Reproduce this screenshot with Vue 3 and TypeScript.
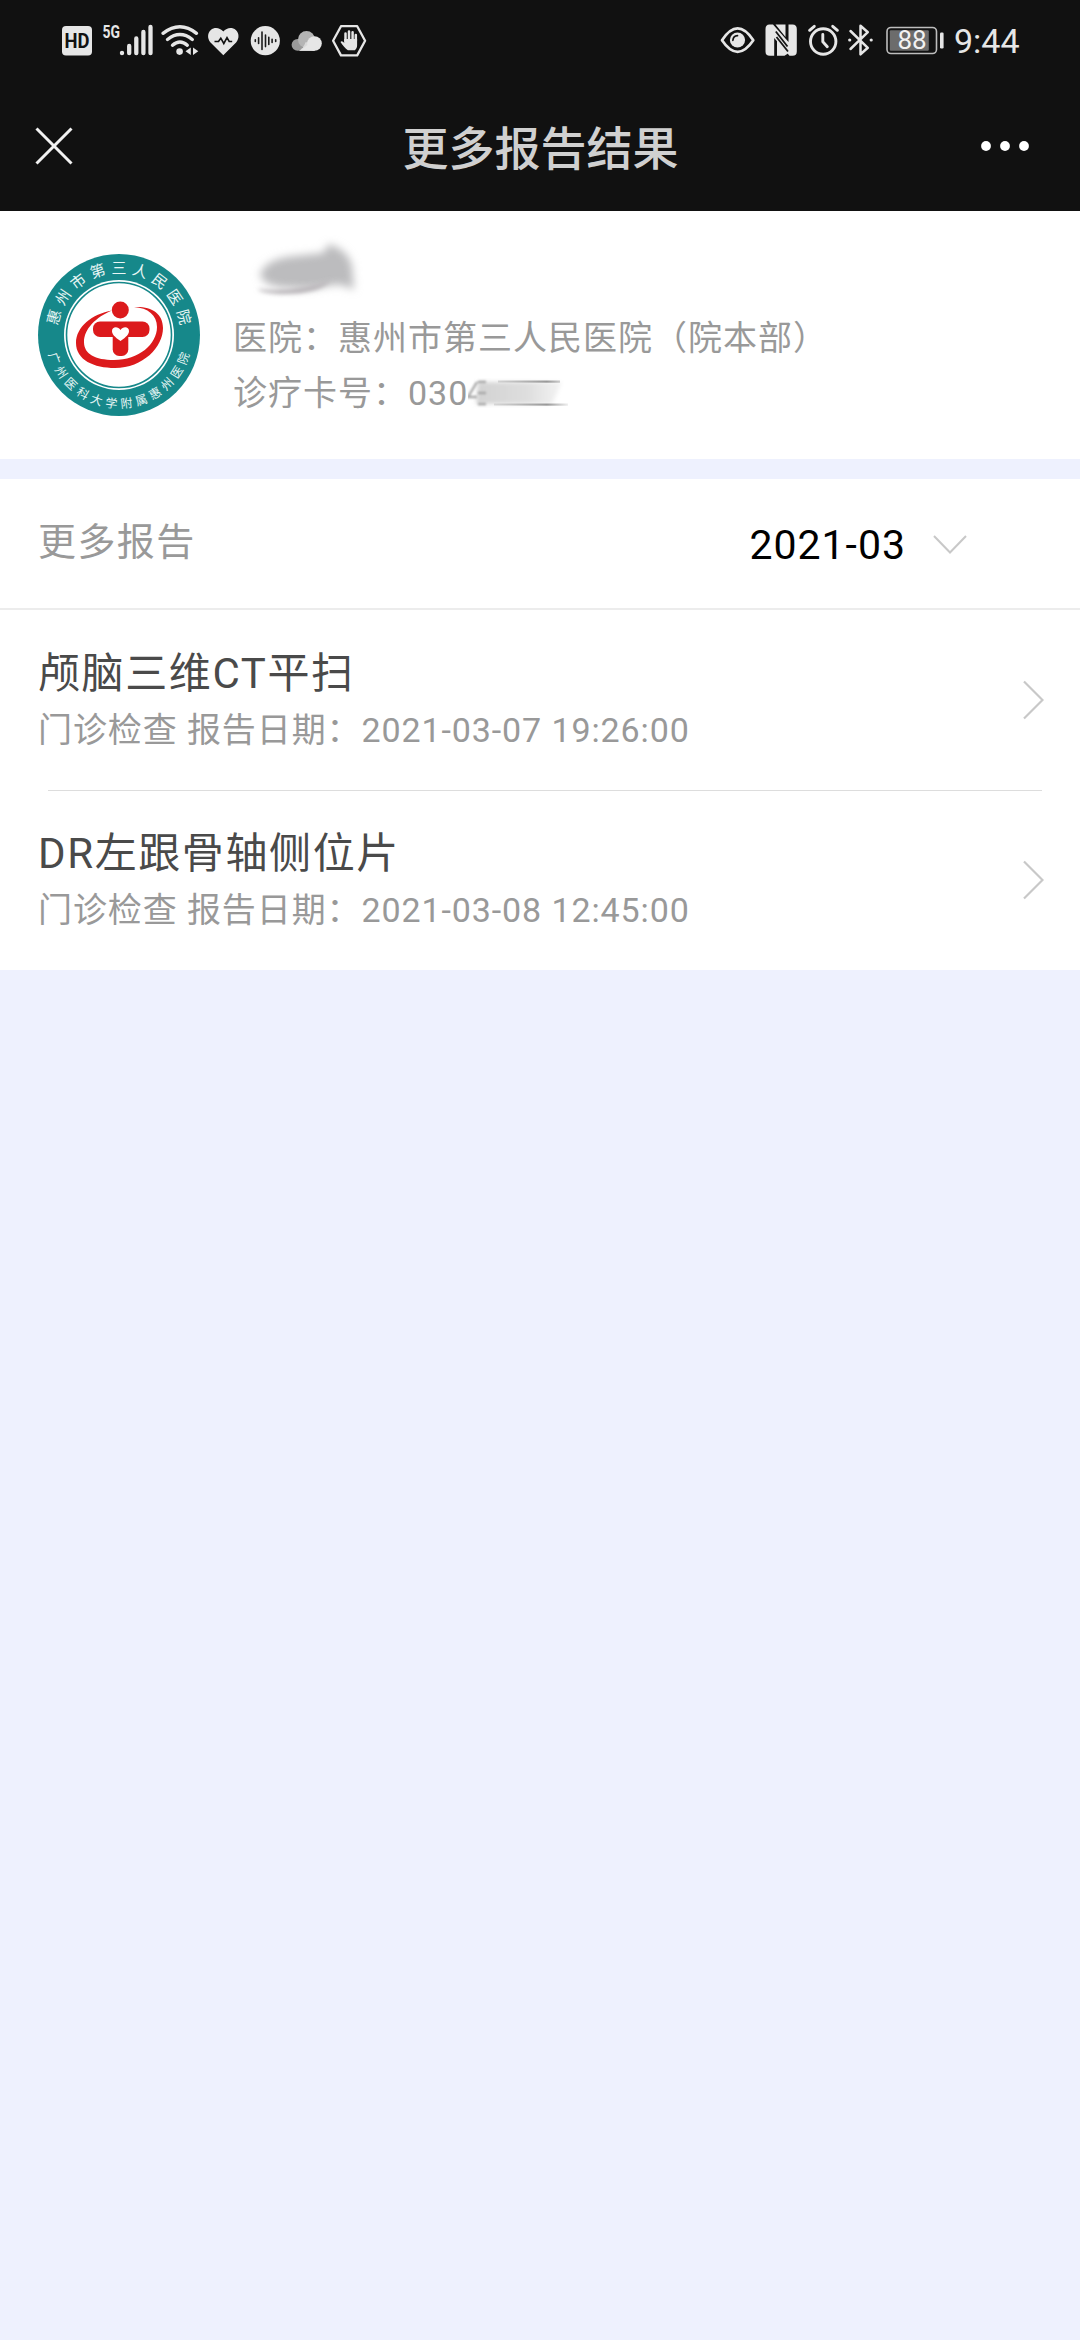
<template>
  <div class="page">
    <header class="top">
      <div class="status-bar">
        <div class="status-group">
          <svg width="40" height="50" viewBox="58 15 40 50">
            <rect x="62" y="26" width="30" height="29.5" rx="4" fill="#e6e6e6" />
            <text x="77" y="47.8" class="hd" text-anchor="middle" textLength="25" lengthAdjust="spacingAndGlyphs">HD</text>
          </svg>
          <svg width="60" height="50" viewBox="98 15 60 50">
            <text x="102.5" y="38.4" class="net" textLength="17.5" lengthAdjust="spacingAndGlyphs">5G</text>
            <path d="M122 52.8v.4M129.2 46v7.2M136.3 38.5v14.7M143.4 32v21.2M150.5 27v26.2" stroke="#e6e6e6" stroke-width="4.3" stroke-linecap="round" />
          </svg>
          <svg width="45" height="50" viewBox="158 15 45 50" fill="none" stroke="#e6e6e6" stroke-linecap="round">
            <path d="M163 33.3Q180 20.2 196.5 33.3" stroke-width="3.4" />
            <path d="M167.5 39.5Q180 29.7 192.3 39.5" stroke-width="3.4" />
            <path d="M172.5 45.2Q180 38.7 187.3 45.2" stroke-width="3.4" />
            <circle cx="179.6" cy="51.6" r="3.3" fill="#e6e6e6" stroke="none" />
            <path d="M190.8 47.5v7.5l-5.3-3.7zM193 47.5v7.5l5.3-3.7z" fill="#e6e6e6" stroke="none" />
          </svg>
          <svg width="40" height="50" viewBox="203 15 40 50">
            <path d="M223.3 55.3L210.5 42.5C207.2 38.7 207.3 33 210.8 30C214.5 26.9 219.8 27.5 223.3 31.6C226.8 27.5 232.1 26.9 235.8 30C239.3 33 239.4 38.7 236.1 42.5Z" fill="#e6e6e6" />
            <path d="M214.5 41.5h4l2.3-3.3 3 5.3 3.2-5.9 2.2 3.9h3" fill="none" stroke="#111" stroke-width="1.6" />
          </svg>
          <svg width="43" height="50" viewBox="243 15 43 50">
            <circle cx="265.3" cy="40.7" r="14.6" fill="#e6e6e6" />
            <path d="M255.3 39.7v1.8M258.6 37.7v5.8M262 32v17.5M265.5 35v11.6M268.8 37.2v7.2M272.1 39.2v3.2M275.7 39.8v1.6" stroke="#1c1c1c" stroke-width="1.6" stroke-linecap="round" />
          </svg>
          <svg width="41" height="50" viewBox="286 15 41 50">
            <circle cx="297.5" cy="44.8" r="5.9" fill="#9a9a9a" />
            <circle cx="306.5" cy="39.5" r="8.5" fill="#b5b5b5" />
            <path d="M299 50.7c3-2 5.5-5 6.5-8.5h9v8.5z" fill="#d9d9d9" />
            <circle cx="314.5" cy="43.5" r="7.3" fill="#e6e6e6" />
            <path d="M297.5 50.7c6 0 7-5.2 12-6.7h5v6.7z" fill="#e6e6e6" />
          </svg>
          <svg width="44" height="50" viewBox="327 15 44 50">
            <path d="M341 26.2h16.2l7.9 14.6-7.9 14.6H341l-7.9-14.6z" fill="none" stroke="#e6e6e6" stroke-width="2.3" stroke-linejoin="round" />
            <path d="M345.5 41V33.5M349 40V31.5M352.6 40V32.2M355.8 41V35" stroke="#e6e6e6" stroke-width="2.5" stroke-linecap="round" />
            <path d="M344.2 39h12.9v6.5c0 2-1 3.5-2.2 4.8h-7c-2.5-1.7-5.2-5-7.4-8.3 1-1.6 2.5-.7 3.7 1z" fill="#e6e6e6" />
          </svg>
        </div>
        <div class="status-group">
          <svg width="44" height="50" viewBox="716 15 44 50">
            <path d="M722 40.2Q737.6 16.5 753.3 40.2Q737.6 63.4 722 40.2Z" fill="none" stroke="#e6e6e6" stroke-width="2.7" stroke-linejoin="round" />
            <circle cx="737.5" cy="40" r="7.6" fill="#e6e6e6" />
            <path d="M732.9 40.3c.2-2.8 1.8-4.5 4.6-4.7" fill="none" stroke="#111" stroke-width="1.7" stroke-linecap="round" />
          </svg>
          <svg width="43" height="50" viewBox="760 15 43 50">
            <path d="M769.5 24.5H773L788.5 42V24.5H792.5Q796.8 24.5 796.8 29V51.5Q796.8 55.8 792.5 55.8H789.5L774.2 38V55.8H769.8Q765.5 55.8 765.5 51.5V29Q765.5 24.5 769.5 24.5Z" fill="#e6e6e6" />
            <path d="M777 37V55.8H784.5L788 53.5ZM775.5 24.5H785.5V37Z" fill="#e6e6e6" />
            <path d="M775.8 31.5L787.5 46.5M776.5 37L788 51.5" stroke="#151515" stroke-width="1.8" />
          </svg>
          <svg width="41" height="50" viewBox="803 15 41 50" fill="none" stroke="#e6e6e6" stroke-width="2.9" stroke-linecap="round">
            <circle cx="823.2" cy="41.5" r="12.7" />
            <path d="M822.8 34.5v7.2l4.5 5" />
            <path d="M809.6 30.3l4.7-4M832.7 26.3l4.7 4" />
          </svg>
          <svg width="37" height="50" viewBox="844 15 37 50">
            <path d="M850.5 31L867.8 47.8L860.5 54.3V25.7L867.8 32.2L850.5 49" fill="none" stroke="#e6e6e6" stroke-width="2.5" stroke-linejoin="round" stroke-linecap="round" />
            <circle cx="849.7" cy="40" r="1.6" fill="#e6e6e6" />
            <circle cx="871.2" cy="40" r="1.6" fill="#e6e6e6" />
          </svg>
          <svg width="69" height="50" viewBox="881 15 69 50">
            <rect x="887" y="27.5" width="49.5" height="26" rx="4" fill="none" stroke="#bdbdbd" stroke-width="1.6" />
            <rect x="889.8" y="30.3" width="39" height="20.4" rx="1" fill="#6c6c6c" />
            <rect x="940" y="32.5" width="3.6" height="16" rx="1.2" fill="#e6e6e6" />
            <text x="912" y="49.2" class="battery" text-anchor="middle">88</text>
          </svg>
          <span class="clock">9:44</span>
        </div>
      </div>
      <div class="nav-bar">
        <svg width="40" height="40" viewBox="0 0 40 40">
          <path d="M2.5 2.5L37.5 37.5M37.5 2.5L2.5 37.5" stroke="#f2f2f2" stroke-width="3" />
        </svg>
        <h1>更多报告结果</h1>
        <svg width="50" height="12" viewBox="0 0 50 12" fill="#fff">
          <circle cx="6" cy="6" r="4.9" />
          <circle cx="25" cy="6" r="4.9" />
          <circle cx="44" cy="6" r="4.9" />
        </svg>
      </div>
    </header>

    <section class="patient">
      <svg width="164" height="164" viewBox="-82 -82 164 164">
        <defs>
          <path id="arc-top" d="M-62 0A62 62 0 0 1 62 0" />
          <path id="arc-bottom" d="M-73 0A73 73 0 0 0 73 0" />
        </defs>
        <circle r="81" fill="#16888a" />
        <circle r="55" fill="#fff" />
        <circle r="52.5" fill="none" stroke="#16888a" stroke-width="1.6" />
        <text class="seal seal-top"><textPath href="#arc-top" startOffset="50%" text-anchor="middle" textLength="176">惠州市第三人民医院</textPath></text>
        <text class="seal seal-bottom"><textPath href="#arc-bottom" startOffset="50%" text-anchor="middle" textLength="190">广州医科大学附属惠州医院</textPath></text>
        <g fill="#dc1a1c">
          <circle cx="1.3" cy="-25" r="8.5" />
          <rect x="-26" y="-13.5" width="56.5" height="15.5" rx="7" />
          <rect x="-6.3" y="-12" width="15.6" height="33" rx="6.5" />
          <path d="M-7 -24.5C-27 -21 -43 -8 -43 8C-43 25 -25 33 -4 33C24 33 44 12 44 -7C44 -22 32 -29 15 -28C29 -27 38 -20 38 -8C38 9 20 25 -5 25C-24 25 -35 19 -35 7C-35 -6 -23 -18 -7 -24.5Z" />
        </g>
        <path d="M1.5 6C-4.5 2 -7 -1 -7 -4C-7 -8.5 -1 -9 1.5 -5C4 -9 10 -8.5 10 -4C10 -1 7.5 2 1.5 6Z" fill="#fff" />
      </svg>
      <div class="patient-info">
        <svg class="name-smudge" width="150" height="76" viewBox="0 0 150 76">
          <defs>
            <filter id="soft" x="-30%" y="-30%" width="160%" height="160%"><feGaussianBlur stdDeviation="4.5" /></filter>
            <filter id="soft-small" x="-30%" y="-50%" width="160%" height="200%"><feGaussianBlur stdDeviation="2" /></filter>
            <filter id="soft-tiny" x="-10%" y="-30%" width="120%" height="160%"><feGaussianBlur stdDeviation="1" /></filter>
            <linearGradient id="fade">
              <stop offset="0" stop-color="#d2d2d2" />
              <stop offset="0.6" stop-color="#dedede" />
              <stop offset="1" stop-color="#f4f4f4" />
            </linearGradient>
            <linearGradient id="fade-line" gradientUnits="userSpaceOnUse" x1="20" y1="0" x2="104" y2="0">
              <stop offset="0" stop-color="#999" stop-opacity="0.2" />
              <stop offset="0.7" stop-color="#999" />
              <stop offset="1" stop-color="#999" stop-opacity="0" />
            </linearGradient>
          </defs>
          <path d="M27 40Q34 24 62 22L90 19L96 10Q115 16 119 32L121 56Q110 50 100 51Q80 56 60 54Q30 54 27 40Z" fill="#bcbcbe" filter="url(#soft)" />
          <path d="M24 55Q62 59 98 46Q84 61 46 60Q28 59 24 55Z" fill="#b8b4b8" filter="url(#soft-small)" />
        </svg>
        <p>医院：惠州市第三人民医院（院本部）</p>
        <p class="card-line">
          诊疗卡号：030
          <svg width="112" height="34" viewBox="0 0 112 34">
            <path d="M10 6H94L84 28H8Z" fill="url(#fade)" filter="url(#soft-small)" />
            <path d="M9 6L0 21H9M10 6H18M10 17H18M10 28H18" fill="none" stroke="#a8a8a8" stroke-width="2.4" filter="url(#soft-tiny)" />
            <path d="M30 5.5L92 5.6M26 28.5L100 28.6" stroke="url(#fade-line)" stroke-width="2.2" />
          </svg>
        </p>
      </div>
    </section>

    <section class="reports">
      <div class="filter">
        <span class="filter-title">更多报告</span>
        <div class="month">
          <span>{{ month }}</span>
          <svg width="36" height="22" viewBox="0 0 36 22">
            <path d="M2 2L18 18.5L34 2" fill="none" stroke="#c8c8c8" stroke-width="2" />
          </svg>
        </div>
      </div>
      <ul class="list">
        <li v-for="report in reports" :key="report.date" class="item">
          <div class="item-text">
            <h2>{{ report.title }}</h2>
            <p>{{ report.type }} 报告日期：{{ report.date }}</p>
          </div>
          <svg width="22" height="40" viewBox="0 0 22 40">
            <path d="M2 1.5L20.5 20L2 38.5" fill="none" stroke="#c8c8c8" stroke-width="2.2" />
          </svg>
        </li>
      </ul>
    </section>
  </div>
</template>

<script setup lang="ts">
import { ref } from 'vue';

interface Report {
  title: string;
  type: string;
  date: string;
}

const month = ref('2021-03');

const reports = ref<Report[]>([
  { title: '颅脑三维CT平扫', type: '门诊检查', date: '2021-03-07 19:26:00' },
  { title: 'DR左跟骨轴侧位片', type: '门诊检查', date: '2021-03-08 12:45:00' },
]);
</script>

<style>
body {
  margin: 0;
  background: #eef1fe;
}
</style>

<style scoped>
.page {
  min-height: 2340px;
  background: #eef1fe;
  font-family: Roboto, 'Noto Sans CJK SC', sans-serif;
}

svg {
  display: block;
  flex: none;
}

h1,
h2,
p,
ul {
  margin: 0;
  padding: 0;
  font-weight: 400;
}

.top {
  height: 211px;
  background: #111;
}

.status-bar {
  display: flex;
  justify-content: space-between;
  height: 80px;
  padding: 15px 59px 0 58px;
  box-sizing: border-box;
}

.status-group {
  display: flex;
  height: 50px;
}

.hd {
  font-size: 20px;
  font-weight: 700;
  fill: #111;
}

.net {
  font-size: 19px;
  font-weight: 700;
  fill: #e6e6e6;
}

.battery {
  font-size: 26px;
  fill: #f2f2f2;
}

.clock {
  width: 71px;
  padding: 7px 0 0 4px;
  box-sizing: border-box;
  font-size: 34px;
  line-height: 38px;
  color: #e6e6e6;
  white-space: nowrap;
}

.nav-bar {
  display: flex;
  align-items: center;
  height: 132px;
  padding: 0 50px 0 34px;
}

.nav-bar h1 {
  flex: 1;
  padding: 6px 0 0 27px;
  font-size: 46px;
  font-weight: 500;
  line-height: 60px;
  text-align: center;
  color: #d0d0d0;
}

.patient {
  display: flex;
  height: 248px;
  padding: 42px 37px 0;
  box-sizing: border-box;
  background: #fff;
}

.seal {
  fill: #e8f6f5;
}

.seal-top {
  font-size: 15px;
}

.seal-bottom {
  font-size: 12px;
}

.patient-info {
  padding-left: 32px;
  font-size: 34px;
  line-height: 56px;
  letter-spacing: 1px;
  color: #999;
}

.name-smudge {
  margin-top: -19px;
}

.card-line {
  display: flex;
  align-items: center;
  margin-top: -1px;
}

.reports {
  margin-top: 20px;
  background: #fff;
}

.filter {
  display: flex;
  align-items: center;
  justify-content: space-between;
  height: 131px;
  padding: 0 112px 0 38px;
  box-sizing: border-box;
  border-bottom: 2px solid #ececec;
}

.filter-title {
  padding-bottom: 11px;
  font-size: 38px;
  letter-spacing: 1.4px;
  color: #999;
}

.month {
  display: flex;
  align-items: center;
  gap: 26px;
  padding-top: 2px;
  font-size: 41px;
  letter-spacing: 1px;
  color: #000;
}

.list {
  list-style: none;
}

.item {
  position: relative;
  display: flex;
  align-items: center;
  justify-content: space-between;
  height: 180px;
  padding: 0 36px 0 38px;
}

.item + .item::before {
  content: '';
  position: absolute;
  top: 0;
  left: 48px;
  right: 38px;
  height: 1px;
  background: #ddd;
}

.item-text h2 {
  padding-top: 2px;
  font-size: 42px;
  line-height: 58px;
  letter-spacing: 1.6px;
  color: #4a4a4a;
}

.item-text p {
  font-size: 34px;
  line-height: 54px;
  letter-spacing: 0.9px;
  color: #999;
}
</style>
